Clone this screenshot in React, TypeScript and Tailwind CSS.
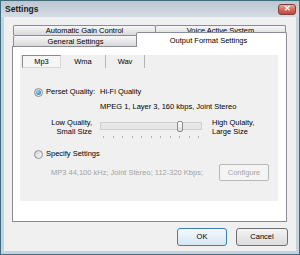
import React from "react";

function Radio({ checked }: { checked?: boolean }) {
  return (
    <span className="w-[9px] h-[9px] shrink-0 rounded-full border border-[#8e8f8f] bg-gradient-to-br from-[#d0d0d0] to-[#fbfbfb] flex items-center justify-center">
      {checked && (
        <span className="w-[5px] h-[5px] rounded-full bg-[radial-gradient(circle_at_35%_35%,#9ad6f7,#1b5fa8)]" />
      )}
    </span>
  );
}

const backTab =
  "h-[10px] flex items-center justify-center pt-[1px] border border-b-0 border-[#898c95] rounded-t-[2px] bg-gradient-to-b from-[#f7f7f7] to-[#dadada]";

export default function App() {
  const ticks = Array.from({ length: 11 });

  return (
    <div className="w-[300px] h-[255px] border border-[#3b6e80] bg-[#c9d2dc] flex flex-col font-['Liberation_Sans',Arial,sans-serif] text-[7.5px] leading-none text-black">
      {/* title bar */}
      <div className="h-[16px] shrink-0 flex items-center justify-between pl-[4px] pr-[3px] bg-gradient-to-b from-[#bcc6d1] to-[#d5dce5]">
        <span className="font-bold text-[8.5px] text-[#1a1a1a]">Settings</span>
        <div className="w-[18px] h-[11px] rounded-[3px] border border-[#8a3b33] bg-gradient-to-b from-[#e9a89f] via-[#d06a5e] to-[#c24a3d] flex items-center justify-center text-white text-[8px] font-bold">
          ✕
        </div>
      </div>

      {/* client area */}
      <div className="mx-[3px] h-[234px] bg-[#f0f0f0] flex flex-col pl-[8px]">
        {/* tabs */}
        <div className="mt-[8px] w-[275px] flex flex-col">
          <div className="flex">
            <div className={`${backTab} ml-[1px] w-[143px]`}>Automatic Gain Control</div>
            <div className={`${backTab} ml-[-1px] w-[131px]`}>Voice Active System</div>
          </div>
          <div className="flex items-end h-[11px]">
            <div className="h-[11px] ml-[1px] w-[125px] flex items-center justify-center pt-[1px] border border-b-0 border-[#898c95] rounded-t-[2px] bg-gradient-to-b from-[#f7f7f7] to-[#dadada]">
              General Settings
            </div>
            <div className="relative z-10 h-[15px] mb-[-1px] ml-[-2px] w-[151px] flex items-center justify-center pt-[2px] pr-[6px] border border-b-0 border-[#898c95] rounded-t-[2px] bg-white">
              Output Format Settings
            </div>
          </div>

          {/* tab panel */}
          <div className="h-[176px] border border-[#898c95] bg-white pl-[7px] pt-[8px]">
            <div className="w-[258px] h-[146px] bg-[#f0f0f0] flex flex-col">
              {/* sub tabs */}
              <div className="h-[13px] flex items-stretch">
                <div className="ml-[2px] w-[39px] flex items-center justify-center border border-t-[#8a8a8a] border-l-[#8a8a8a] border-b-[#d8d8d8] border-r-[#d8d8d8] bg-[#f6f6f6]">
                  Mp3
                </div>
                <div className="w-[45px] flex items-center justify-center border-r border-[#b4b4b4]">Wma</div>
                <div className="w-[39px] flex items-center justify-center border-r border-[#b4b4b4]">Wav</div>
              </div>

              {/* preset quality */}
              <div className="mt-[19px] h-[10px] flex items-center">
                <div className="w-[80px] pl-[14px] flex items-center gap-[3px]">
                  <Radio checked />
                  <span>Perset Quality:</span>
                </div>
                <span>Hi-Fi Quality</span>
              </div>
              <div className="mt-[5px] h-[10px] flex items-center pl-[80px]">
                MPEG 1, Layer 3, 160 kbps, Joint Stereo
              </div>

              {/* slider */}
              <div className="mt-[6px] h-[21px] flex">
                <div className="w-[72px] text-right leading-[9px]">
                  Low Quality,
                  <br />
                  Small Size
                </div>
                <div className="ml-[8px] w-[102px] relative">
                  <div className="mt-[4px] h-[8px] border border-[#cfcfcf] bg-[#e7e7e7]" />
                  <div className="absolute left-[77px] top-[3px] w-[6px] h-[11px] rounded-[2px] border border-[#8a8a8a] bg-gradient-to-b from-[#ffffff] to-[#dcdcdc]" />
                  <div className="mt-[6px] px-[3px] flex justify-between">
                    {ticks.map((_, i) => (
                      <span key={i} className="w-[1px] h-[2px] bg-[#b0b0b0]" />
                    ))}
                  </div>
                </div>
                <div className="ml-[10px] leading-[9px]">
                  High Qulaity,
                  <br />
                  Large Size
                </div>
              </div>

              {/* specify settings */}
              <div className="mt-[10px] h-[10px] pl-[14px] flex items-center gap-[3px]">
                <Radio />
                <span>Specify Settings</span>
              </div>
              <div className="mt-[5px] h-[17px] flex items-center justify-between pl-[31px] pr-[9px]">
                <span className="text-[#a3a3a3]">MP3 44,100 kHz; Joint Stereo; 112-320 Kbps;</span>
                <div className="w-[50px] h-[17px] rounded-[2px] border border-[#b8b8b8] bg-[#f4f4f4] text-[#a3a3a3] flex items-center justify-center">
                  Configure
                </div>
              </div>
            </div>
          </div>
        </div>

        {/* buttons */}
        <div className="mt-[6px] flex justify-end gap-[9px] pr-[8px]">
          <div className="w-[50px] h-[18px] rounded-[3px] border border-[#3c7fb1] bg-gradient-to-b from-[#f2f8fc] to-[#d6e8f5] flex items-center justify-center">
            OK
          </div>
          <div className="w-[52px] h-[18px] rounded-[3px] border border-[#707070] bg-gradient-to-b from-[#f4f4f4] to-[#dcdcdc] flex items-center justify-center">
            Cancel
          </div>
        </div>
      </div>
    </div>
  );
}
